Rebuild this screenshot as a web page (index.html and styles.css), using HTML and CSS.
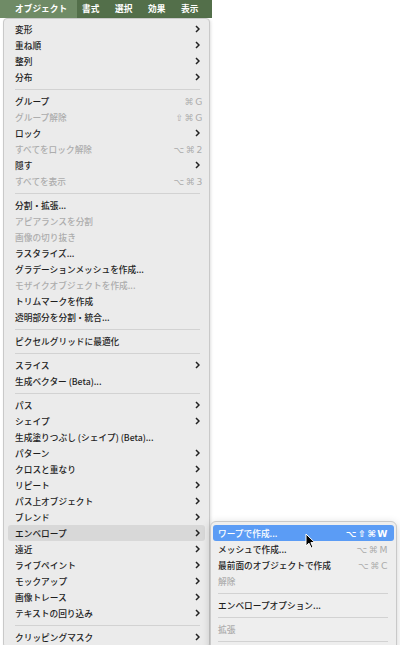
FILE: index.html
```html
<!DOCTYPE html>
<html lang="ja">
<head>
<meta charset="utf-8">
<link rel="stylesheet" href="styles.css">
</head>
<body>
<div class="screen">
  <div class="bar">
    <div class="bar-item active">オブジェクト</div>
    <div class="bar-item">書式</div>
    <div class="bar-item">選択</div>
    <div class="bar-item">効果</div>
    <div class="bar-item">表示</div>
  </div>
  <div class="menu main">
    <div class="row"><span class="label">変形</span><span class="chev"></span></div>
    <div class="row"><span class="label">重ね順</span><span class="chev"></span></div>
    <div class="row"><span class="label">整列</span><span class="chev"></span></div>
    <div class="row"><span class="label">分布</span><span class="chev"></span></div>
    <div class="sep"></div>
    <div class="row"><span class="label">グループ</span><span class="key">⌘G</span></div>
    <div class="row dis"><span class="label">グループ解除</span><span class="key">⇧⌘G</span></div>
    <div class="row"><span class="label">ロック</span><span class="chev"></span></div>
    <div class="row dis"><span class="label">すべてをロック解除</span><span class="key">⌥⌘2</span></div>
    <div class="row"><span class="label">隠す</span><span class="chev"></span></div>
    <div class="row dis"><span class="label">すべてを表示</span><span class="key">⌥⌘3</span></div>
    <div class="sep"></div>
    <div class="row"><span class="label">分割・拡張...</span></div>
    <div class="row dis"><span class="label">アピアランスを分割</span></div>
    <div class="row dis"><span class="label">画像の切り抜き</span></div>
    <div class="row"><span class="label">ラスタライズ...</span></div>
    <div class="row"><span class="label">グラデーションメッシュを作成...</span></div>
    <div class="row dis"><span class="label">モザイクオブジェクトを作成...</span></div>
    <div class="row"><span class="label">トリムマークを作成</span></div>
    <div class="row"><span class="label">透明部分を分割・統合...</span></div>
    <div class="sep"></div>
    <div class="row"><span class="label">ピクセルグリッドに最適化</span></div>
    <div class="sep"></div>
    <div class="row"><span class="label">スライス</span><span class="chev"></span></div>
    <div class="row"><span class="label">生成ベクター (Beta)...</span></div>
    <div class="sep"></div>
    <div class="row"><span class="label">パス</span><span class="chev"></span></div>
    <div class="row"><span class="label">シェイプ</span><span class="chev"></span></div>
    <div class="row"><span class="label">生成塗りつぶし (シェイプ) (Beta)...</span></div>
    <div class="row"><span class="label">パターン</span><span class="chev"></span></div>
    <div class="row"><span class="label">クロスと重なり</span><span class="chev"></span></div>
    <div class="row"><span class="label">リピート</span><span class="chev"></span></div>
    <div class="row"><span class="label">パス上オブジェクト</span><span class="chev"></span></div>
    <div class="row"><span class="label">ブレンド</span><span class="chev"></span></div>
    <div class="row open"><span class="label">エンベロープ</span><span class="chev"></span></div>
    <div class="row"><span class="label">遠近</span><span class="chev"></span></div>
    <div class="row"><span class="label">ライブペイント</span><span class="chev"></span></div>
    <div class="row"><span class="label">モックアップ</span><span class="chev"></span></div>
    <div class="row"><span class="label">画像トレース</span><span class="chev"></span></div>
    <div class="row"><span class="label">テキストの回り込み</span><span class="chev"></span></div>
    <div class="sep"></div>
    <div class="row"><span class="label">クリッピングマスク</span><span class="chev"></span></div>
  </div>
  <div class="menu sub">
    <div class="row sel"><span class="label">ワープで作成...</span><span class="key">⌥⇧⌘W</span></div>
    <div class="row"><span class="label">メッシュで作成...</span><span class="key">⌥⌘M</span></div>
    <div class="row"><span class="label">最前面のオブジェクトで作成</span><span class="key">⌥⌘C</span></div>
    <div class="row dis"><span class="label">解除</span></div>
    <div class="sep"></div>
    <div class="row"><span class="label">エンベロープオプション...</span></div>
    <div class="sep"></div>
    <div class="row dis"><span class="label">拡張</span></div>
    <div class="sep"></div>
  </div>
  <svg class="cursor" width="11" height="16" viewBox="0 0 11 16">
    <path d="M1 1 L1 13 L4 10.2 L6.2 15 L8 14.2 L5.9 9.6 L9.8 9.6 Z" fill="#000" stroke="#fff" stroke-width="1" stroke-linejoin="round"/>
  </svg>
</div>
</body>
</html>
```
FILE: styles.css
```css
html, body {
  margin: 0;
  padding: 0;
  background: #ffffff;
}
.screen {
  position: relative;
  width: 400px;
  height: 645px;
  overflow: hidden;
  font-family: "Noto Sans CJK JP", "Noto Sans", sans-serif;
}
.bar {
  display: flex;
  width: 212px;
  height: 18px;
  background: #536f4a;
}
.bar-item {
  width: 33px;
  box-sizing: border-box;
  padding-left: 5px;
  color: #ffffff;
  font-size: 8.7px;
  font-weight: 700;
  line-height: 18px;
  white-space: nowrap;
}
.bar-item.active {
  width: 77px;
  padding-left: 15px;
  background: #6f8b66;
}
.menu {
  background: #ebebeb;
  border: 1px solid #c9c9c9;
  box-sizing: border-box;
}
.main {
  width: 207px;
  margin-left: 3px;
  padding: 2px 4px 0 4px;
  height: 630px;
  border-radius: 4px;
  box-shadow: 1px 1px 3px rgba(0,0,0,0.12);
}
.sub {
  position: absolute;
  left: 210px;
  top: 521px;
  width: 187px;
  height: 140px;
  padding: 3px 2px 0 2px;
  border-radius: 6px;
  background: #eeeeee;
  box-shadow: 0 2px 8px rgba(0,0,0,0.18);
}
.row {
  display: flex;
  align-items: center;
  height: 16px;
  padding: 0 5px 0 7px;
  border-radius: 3px;
  font-size: 8.7px;
  font-weight: 500;
  color: #1e1e1e;
  white-space: nowrap;
}
.sub .row {
  padding: 0 6px 0 5px;
}
.label {
  flex: 1;
}
.dis {
  color: #adadad;
}
.key {
  font-family: "DejaVu Sans", sans-serif;
  font-size: 9.2px;
  font-weight: 400;
  color: #ababab;
  letter-spacing: 1.6px;
  margin-right: -4px;
}
.sub .key {
  margin-right: -1px;
}
.chev {
  width: 5px;
  height: 8px;
  background: no-repeat center / 5px 8px url("data:image/svg+xml;utf8,<svg xmlns='http://www.w3.org/2000/svg' width='5' height='8' viewBox='0 0 5 8'><path d='M1 1 L4 4 L1 7' fill='none' stroke='%23222' stroke-width='1.5'/></svg>");
}
.open {
  background: #d8d8d8;
}
.sel {
  background: #5b9cf5;
  color: #ffffff;
}
.sel .key {
  color: #ffffff;
  font-weight: 700;
}
.sep {
  height: 8px;
  display: flex;
  align-items: center;
  padding: 0 5px 0 7px;
}
.sep::before {
  content: "";
  flex: 1;
  height: 1px;
  background: #d2d2d2;
}
.sub .sep {
  padding: 0 6px 0 5px;
}
.cursor {
  position: absolute;
  left: 305px;
  top: 533px;
}
```
